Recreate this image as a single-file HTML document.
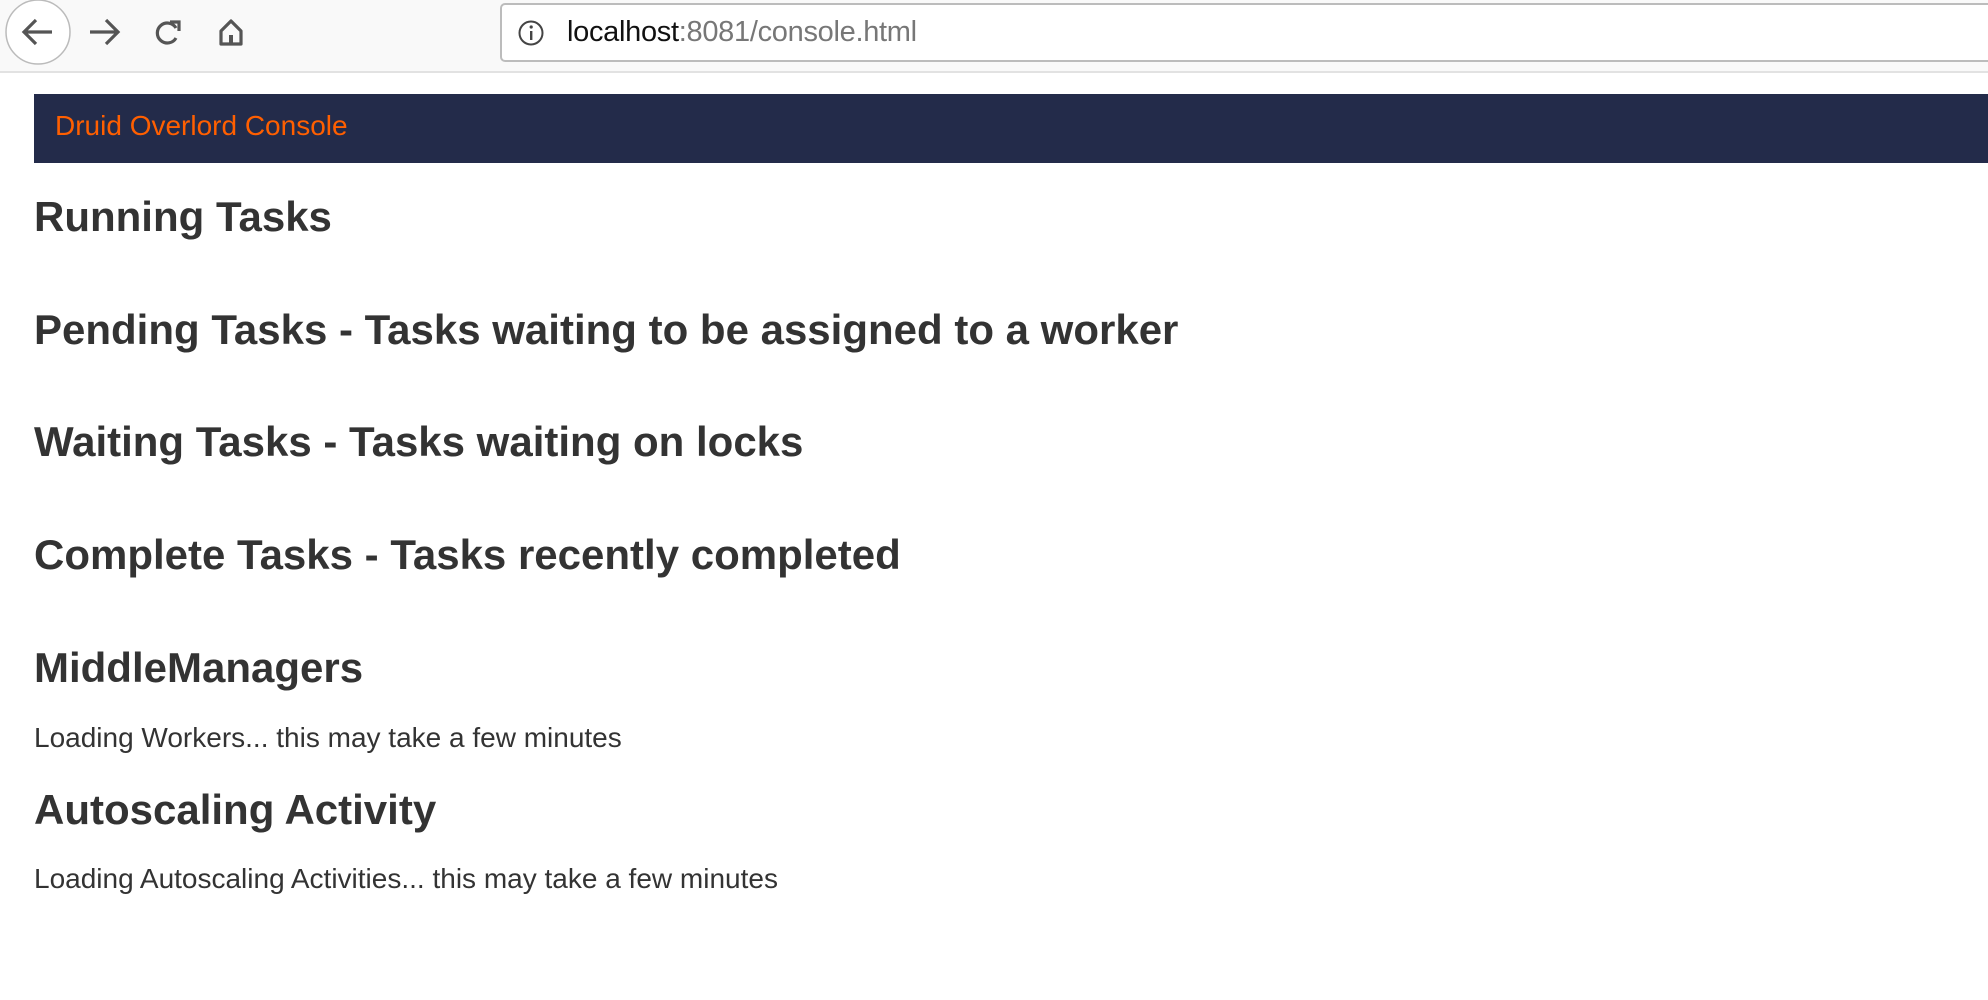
<!DOCTYPE html>
<html><head><meta charset="utf-8"><style>
body{margin:0;width:1988px;height:1000px;background:#fff;position:relative;overflow:hidden;font-family:"Liberation Sans",Arial,sans-serif;}
.a{position:absolute;white-space:nowrap;}
.h{font-weight:bold;font-size:42px;line-height:41px;color:#333;left:34px;}
.p{font-size:28px;line-height:28px;color:#333;left:34px;}
</style></head><body>
<div class="a" style="left:0;top:0;width:1988px;height:71px;background:#f9f9f9;border-bottom:2px solid #e2e2e2;"></div>
<svg class="a" style="left:0;top:0" width="300" height="72">
<circle cx="38" cy="32" r="32" fill="#fff" stroke="#bbb" stroke-width="1.5"/>
<path d="M52 32H25M36 20L24 32L36 44" fill="none" stroke="#555" stroke-width="3.2"/>
<path d="M90 32H117M106 20L118 32L106 44" fill="none" stroke="#555" stroke-width="3.2"/>
<path d="M176 28A10 10 0 1 0 176 38" fill="none" stroke="#555" stroke-width="3.2"/>
<path d="M170 22H179V31" fill="none" stroke="#555" stroke-width="3.2"/>
<path d="M221 31L231 21L241 31V44H221Z" fill="none" stroke="#555" stroke-width="3.2" stroke-linejoin="round"/>
<rect x="229" y="35" width="4" height="9" fill="#555"/>
</svg>
<div class="a" style="left:500px;top:3px;width:1500px;height:55px;background:#fff;border:2px solid #bcbcbc;border-right:none;border-radius:5px 0 0 5px;"></div>
<svg class="a" style="left:517px;top:19px" width="28" height="28"><circle cx="14" cy="14" r="11.5" fill="none" stroke="#444" stroke-width="2"/><rect x="13" y="12" width="2.4" height="9" fill="#444"/><circle cx="14.2" cy="8" r="1.6" fill="#444"/></svg>
<div class="a" style="left:567px;top:18px;font-size:29px;line-height:28px;color:#111;letter-spacing:-0.3px;">localhost<span style="color:#777">:8081/console.html</span></div>
<div class="a" style="left:34px;top:94px;width:1954px;height:69px;background:#232b4a;"></div>
<div class="a" style="left:55px;top:112px;font-size:28px;line-height:28px;color:#ff5f00;">Druid Overlord Console</div>
<div class="a h" style="top:196px">Running Tasks</div>
<div class="a h" style="top:309px">Pending Tasks - Tasks waiting to be assigned to a worker</div>
<div class="a h" style="top:421px">Waiting Tasks - Tasks waiting on locks</div>
<div class="a h" style="top:534px">Complete Tasks - Tasks recently completed</div>
<div class="a h" style="top:647px">MiddleManagers</div>
<div class="a p" style="top:724px">Loading Workers... this may take a few minutes</div>
<div class="a h" style="top:789px">Autoscaling Activity</div>
<div class="a p" style="top:865px">Loading Autoscaling Activities... this may take a few minutes</div>
</body></html>
